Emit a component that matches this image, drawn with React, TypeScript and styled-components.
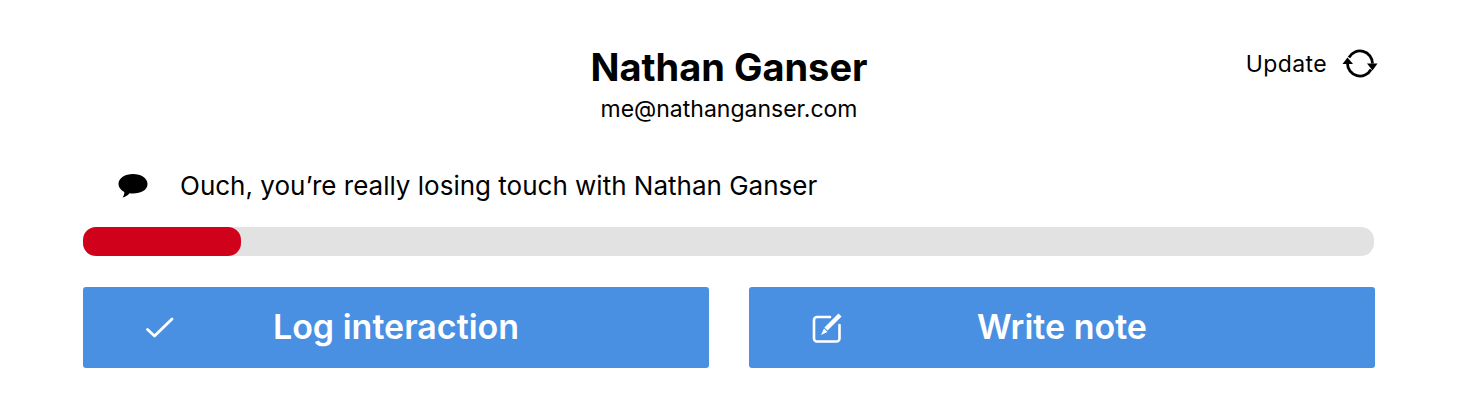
import styled, { createGlobalStyle } from "styled-components";

const GlobalStyle = createGlobalStyle`
  html, body {
    margin: 0;
    padding: 0;
    background: #fff;
    font-family: Inter, "Liberation Sans", sans-serif;
    color: #000;
  }
`;

const Page = styled.div`
  width: 1458px;
  height: 400px;
  box-sizing: border-box;
  padding: 44px 83px 0;
  overflow: hidden;
`;

const Header = styled.header`
  display: grid;
  grid-template-columns: 1fr auto 1fr;
  align-items: start;
`;

const Person = styled.div`
  grid-column: 2;
  display: flex;
  flex-direction: column;
  align-items: center;
`;

const Name = styled.h1`
  margin: 0;
  font-size: 38px;
  line-height: 46px;
  font-weight: 700;
`;

const Email = styled.div`
  margin-top: 6px;
  font-size: 23px;
  line-height: 27px;
`;

const UpdateLink = styled.a`
  grid-column: 3;
  justify-self: end;
  display: flex;
  align-items: center;
  gap: 15px;
  margin: 2px -3px 0 0;
  font-size: 23px;
  letter-spacing: 0.4px;
  line-height: 36px;
`;

const Status = styled.div`
  display: flex;
  align-items: center;
  gap: 32px;
  margin-top: 47px;
  padding-left: 35px;
  font-size: 26px;
  line-height: 32px;
`;

const Track = styled.div`
  height: 29px;
  margin: 25px 1px 0 0;
  border-radius: 13px;
  background: #e2e2e2;
`;

const Fill = styled.div`
  height: 100%;
  border-radius: 13px;
  background: #d0021b;
`;

const Actions = styled.div`
  display: grid;
  grid-template-columns: 626px 626px;
  justify-content: space-between;
  margin-top: 31px;
`;

const ActionButton = styled.button`
  position: relative;
  display: flex;
  align-items: center;
  justify-content: center;
  height: 81px;
  padding: 0 0 2px;
  border: 0;
  border-radius: 3px;
  background: #4a90e2;
  color: #fff;
  font-family: inherit;
  font-size: 34px;
  font-weight: 600;
`;

const ActionIcon = styled.span`
  position: absolute;
  left: 62px;
  top: 0;
  bottom: 0;
  display: flex;
  align-items: center;
`;

const Refresh = () => (
  <svg width="36" height="32" viewBox="0 0 36 32" fill="none">
    <path d="M7 9.500A12.500 12.500 0 0 1 30.500 15.500M29 21.500A12.500 12.500 0 0 1 5.500 15.500" stroke="#000" strokeWidth="2.800" />
    <path d="M0.500 16L5.500 9.500L11 16ZM25 15.500L35.500 15.500L30.500 22.500Z" fill="#000" />
  </svg>
);

const Bubble = () => (
  <svg width="30" height="26" viewBox="0 0 30 26">
    <path
      d="M15 1C23 1 29.500 5 29.500 11C29.500 17 23 20.500 15 20.500C13.500 20.500 12.500 20.400 11.500 20.300C9.500 22.800 7 24 4.500 24.500C5.800 22.900 6.500 20.500 6.300 18.900C2.800 17.200 0.500 14.400 0.500 11C0.500 5 7 1 15 1Z"
      fill="#000"
    />
  </svg>
);

const Check = () => (
  <svg width="30" height="24" viewBox="0 0 30 24" fill="none">
    <path d="M2.500 13.500L9.500 20L27 3" stroke="#fff" strokeWidth="2.800" strokeLinecap="round" strokeLinejoin="round" />
  </svg>
);

const Note = () => (
  <svg width="32" height="32" viewBox="0 0 32 32" fill="none">
    <path
      d="M19 5H6A3 3 0 0 0 3 8V26.500A3 3 0 0 0 6 29.500H25.500A3 3 0 0 0 28.500 26.500V13"
      stroke="#fff"
      strokeWidth="2.600"
      strokeLinecap="round"
    />
    <path d="M29 3L15 17" stroke="#fff" strokeWidth="4.500" strokeLinecap="butt" />
    <path d="M13 16.500L16.500 20L10 23Z" fill="#fff" />
  </svg>
);

export default function App() {
  return (
    <>
      <GlobalStyle />
      <Page>
        <Header>
          <Person>
            <Name>Nathan Ganser</Name>
            <Email>me@nathanganser.com</Email>
          </Person>
          <UpdateLink>
            Update
            <Refresh />
          </UpdateLink>
        </Header>
        <Status>
          <Bubble />
          Ouch, you’re really losing touch with Nathan Ganser
        </Status>
        <Track>
          <Fill style={{ width: `${(158 / 1290) * 100}%` }} />
        </Track>
        <Actions>
          <ActionButton>
            <ActionIcon>
              <Check />
            </ActionIcon>
            Log interaction
          </ActionButton>
          <ActionButton>
            <ActionIcon>
              <Note />
            </ActionIcon>
            Write note
          </ActionButton>
        </Actions>
      </Page>
    </>
  );
}
